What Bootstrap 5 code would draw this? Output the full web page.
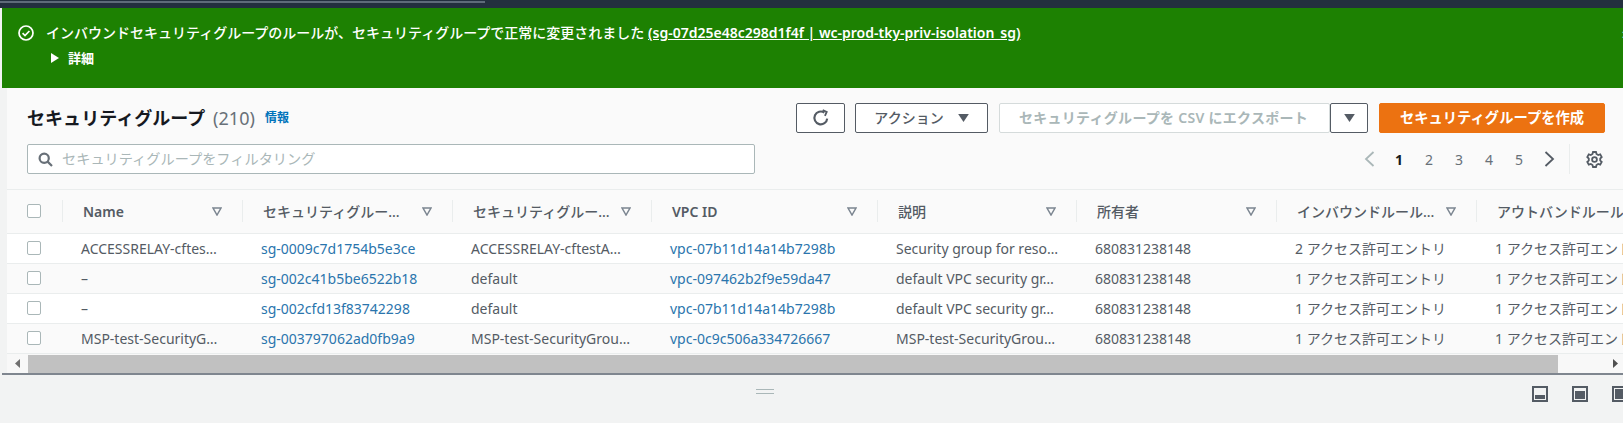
<!DOCTYPE html>
<html lang="ja">
<head>
<meta charset="utf-8">
<title>セキュリティグループ</title>
<link href="https://cdn.jsdelivr.net/npm/bootstrap@5.3.0/dist/css/bootstrap.min.css" rel="stylesheet">
<style>
html,body{height:100%;overflow:hidden;}
body{background:#f2f3f3;font-family:"Noto Sans","Noto Sans CJK JP",sans-serif;font-size:14px;color:#545b64;width:1623px;height:423px;}
.topstrip{height:8px;background:#232f3e;padding-top:1px;}
.topstrip span{display:block;width:485px;height:2px;background:#5f6b7a;}
.flash{height:80px;margin-left:2px;background:#1d8102;color:#fff;padding:14px 0 0 15px;position:relative;}
.flash-main{gap:11px;font-weight:500;line-height:22px;height:22px;}
.flash-main a{color:#fff;text-decoration:underline;font-weight:600;}
.flash-sub{margin:3px 0 0 33px;gap:8px;line-height:22px;font-weight:700;font-size:13px;}
.flash-x{position:absolute;right:-7px;top:19px;font-size:15px;line-height:1;}
.panelbox{margin-left:7px;background:#fafafa;}
.toolbar{padding:15px 18px 15px 20px;border-bottom:1px solid #eaeded;height:102px;}
.hdline{height:30px;}
.hdtitle{font-size:18px;font-weight:700;color:#16191f;margin:0;line-height:30px;letter-spacing:.05px;}
.hdcount{font-size:18px;font-weight:400;color:#687078;margin-left:3px;}
.infolink{font-size:12px;font-weight:600;color:#0073bb;margin-left:10px;text-decoration:none;}
.awsbtn{height:30px;border-radius:2px;border:1px solid #545b64;background:#fff;color:#545b64;font-size:14px;font-weight:500;padding:0;line-height:28px;}
.btn-refresh{width:49px;margin-right:10px;}
.btn-action{width:133px;margin-right:11px;gap:14px;}
.btn-export{width:331px;border-color:#d5dbdb;color:#aab7b8;font-weight:600;justify-content:flex-start;padding-left:19px;letter-spacing:.28px;}
.btn-caret{width:38px;margin-right:11px;}
.btn-create{width:226px;background:#ec7211;border-color:#ec7211;color:#fff;font-weight:700;font-size:14.3px;}
.btn-create:hover,.btn-action:hover,.btn-refresh:hover,.btn-caret:hover{color:inherit;}
.searchrow{margin-top:11px;height:30px;}
.searchbox{width:728px;height:30px;border:1px solid #aab7b8;border-radius:2px;background:#fff;padding-left:10px;gap:9px;color:#aab7b8;font-size:14.2px;line-height:26px;}
.pager{margin-left:auto;height:30px;color:#687078;margin-right:2px;}
.pager b{color:#16191f;}
.pgnum{width:30px;text-align:center;}
.pgprev{width:30px;margin-right:0;}
.pgdiv{width:1px;height:30px;background:#eaeded;margin:0 16px 0 5px;}
.tblwrap{overflow:hidden;height:164px;}
.sgtbl{table-layout:fixed;width:1690px;border-collapse:collapse;margin:0;--bs-table-bg:transparent;}
.sgtbl th{height:43px;padding:0;background:#fafafa;border-bottom:1px solid #eaeded;font-weight:500;color:#545b64;vertical-align:middle;}
.sgtbl th.thb{font-weight:600;}
.thin{height:22px;border-left:1px solid #eaeded;padding:0 20px;justify-content:space-between;white-space:nowrap;overflow:hidden;gap:8px;}
.thin-first{border-left:0;padding:0 0 0 20px;}
.sgtbl td{height:30px;padding:0 0 0 19px;border-bottom:1px solid #eaeded;background:#fff;color:#545b64;vertical-align:middle;white-space:nowrap;overflow:hidden;}
.sgtbl td:first-child{padding-left:20px;}
.sgtbl tr:nth-child(even) td{background:#fafafa;}
.sgtbl td a{color:#2a75ad;text-decoration:none;}
.fakebox{display:block;width:14px;height:14px;border:1px solid #aab7b8;border-radius:2px;background:#fff;}
.sbar{height:19px;background:#f8f8f8;margin-left:0;}
.sbtn{width:21px;height:18px;color:#505050;font-size:9px;}
.sthumb{height:18px;background:#c1c1c1;width:1530px;}
.sbar .send{margin-left:auto;margin-right:0;width:16px;}
.splitbar{border-top:2px solid #7f868f;margin-left:2px;height:49px;}
.grip{margin-left:754px;width:18px;margin-top:14px;height:5px;border-top:1px solid #aab7b8;border-bottom:1px solid #aab7b8;}
.dockicons{margin-left:auto;margin-right:-5px;margin-top:11px;gap:24px;}
</style>
</head>
<body>
<div class="topstrip"><span></span></div>
<div class="flash">
  <div class="d-flex align-items-center flash-main">
    <svg width="18" height="18" viewBox="0 0 18 18" fill="none" stroke="#fff" stroke-width="1.7"><circle cx="9" cy="9" r="7"/><path d="M5.6 9.2l2.4 2.4 4.4-4.6"/></svg>
    <span>インバウンドセキュリティグループのルールが、セキュリティグループで正常に変更されました <a href="#">(sg-07d25e48c298d1f4f | wc-prod-tky-priv-isolation_sg)</a></span>
  </div>
  <div class="d-flex align-items-center flash-sub">
    <svg width="10" height="10" viewBox="0 0 10 10"><path d="M1 0l8 5-8 5z" fill="#fff"/></svg>
    <span>詳細</span>
  </div>
  <span class="flash-x">×</span>
</div>
<div class="panelbox">
  <div class="toolbar">
    <div class="d-flex align-items-center hdline">
      <h2 class="hdtitle">セキュリティグループ <span class="hdcount">(210)</span></h2>
      <a class="infolink" href="#">情報</a>
      <div class="d-flex ms-auto">
        <button class="btn awsbtn btn-refresh d-flex align-items-center justify-content-center" aria-label="更新">
          <svg width="18" height="18" viewBox="0 0 16 16" fill="none" stroke="#545b64" stroke-width="1.9"><path d="M13.5 8.5A5.7 5.7 0 1 1 11 3.2"/><path d="M9.5 1l3.6 1.6-1.6 3.6" stroke-width="1.6"/></svg>
        </button>
        <button class="btn awsbtn btn-action d-flex align-items-center justify-content-center">アクション
          <svg width="11" height="8" viewBox="0 0 12 9"><path d="M0 0h12L6 9z" fill="#545b64"/></svg>
        </button>
        <button class="btn awsbtn btn-export d-flex align-items-center">セキュリティグループを CSV にエクスポート</button>
        <button class="btn awsbtn btn-caret d-flex align-items-center justify-content-center" aria-label="メニュー">
          <svg width="11" height="8" viewBox="0 0 12 9"><path d="M0 0h12L6 9z" fill="#545b64"/></svg>
        </button>
        <button class="btn awsbtn btn-create d-flex align-items-center justify-content-center">セキュリティグループを作成</button>
      </div>
    </div>
    <div class="d-flex align-items-center searchrow">
      <div class="d-flex align-items-center searchbox">
        <svg width="15" height="15" viewBox="0 0 15 15" fill="none" stroke="#687078" stroke-width="2.2"><circle cx="6.2" cy="6.2" r="4.6"/><path d="M9.6 9.6l4.4 4.4"/></svg>
        <span>セキュリティグループをフィルタリング</span>
      </div>
      <div class="d-flex align-items-center pager">
        <span class="pgprev d-flex justify-content-center"><svg width="11" height="16" viewBox="0 0 11 16" fill="none" stroke="#aab7b8" stroke-width="1.8"><path d="M9.5 1L2 8l7.5 7"/></svg></span>
        <b class="pgnum">1</b><span class="pgnum">2</span><span class="pgnum">3</span><span class="pgnum">4</span><span class="pgnum">5</span>
        <span class="pgprev d-flex justify-content-center"><svg width="11" height="16" viewBox="0 0 11 16" fill="none" stroke="#545b64" stroke-width="1.8"><path d="M1.5 1L9 8l-7.5 7"/></svg></span>
        <span class="pgdiv"></span>
        <svg width="17" height="17" viewBox="0 0 17 17" fill="none" stroke="#545b64" stroke-width="1.8"><path d="M7 1h3l.5 2 1.7 1 2-.6 1.5 2.6-1.5 1.5v2l1.500 1.500-1.500 2.600-2-.6-1.700 1-.5 2H7l-.5-2-1.700-1-2 .6L1.300 11l1.500-1.500v-2L1.300 6l1.500-2.600 2 .6 1.700-1z"/><circle cx="8.500" cy="8.500" r="2.400"/></svg>
      </div>
    </div>
  </div>
  <div class="tblwrap">
    <table class="table sgtbl">
      <colgroup><col style="width:55px"><col style="width:180px"><col style="width:210px"><col style="width:199px"><col style="width:226px"><col style="width:199px"><col style="width:200px"><col style="width:200px"><col style="width:221px"></colgroup>
      <thead><tr>
        <th><div class="d-flex align-items-center thin thin-first"><span class="fakebox"></span></div></th>
        <th class="thb"><div class="d-flex align-items-center thin"><span>Name</span><svg width="10" height="9" viewBox="0 0 10 9" fill="none" stroke="#7b8590" stroke-width="1.5"><path d="M1 1h8L5 8z"/></svg></div></th>
        <th><div class="d-flex align-items-center thin"><span>セキュリティグルー...</span><svg width="10" height="9" viewBox="0 0 10 9" fill="none" stroke="#7b8590" stroke-width="1.5"><path d="M1 1h8L5 8z"/></svg></div></th>
        <th><div class="d-flex align-items-center thin"><span>セキュリティグルー...</span><svg width="10" height="9" viewBox="0 0 10 9" fill="none" stroke="#7b8590" stroke-width="1.5"><path d="M1 1h8L5 8z"/></svg></div></th>
        <th class="thb"><div class="d-flex align-items-center thin"><span>VPC ID</span><svg width="10" height="9" viewBox="0 0 10 9" fill="none" stroke="#7b8590" stroke-width="1.5"><path d="M1 1h8L5 8z"/></svg></div></th>
        <th><div class="d-flex align-items-center thin"><span>説明</span><svg width="10" height="9" viewBox="0 0 10 9" fill="none" stroke="#7b8590" stroke-width="1.5"><path d="M1 1h8L5 8z"/></svg></div></th>
        <th><div class="d-flex align-items-center thin"><span>所有者</span><svg width="10" height="9" viewBox="0 0 10 9" fill="none" stroke="#7b8590" stroke-width="1.5"><path d="M1 1h8L5 8z"/></svg></div></th>
        <th><div class="d-flex align-items-center thin"><span>インバウンドルール...</span><svg width="10" height="9" viewBox="0 0 10 9" fill="none" stroke="#7b8590" stroke-width="1.5"><path d="M1 1h8L5 8z"/></svg></div></th>
        <th><div class="d-flex align-items-center thin"><span>アウトバンドルール...</span><svg width="10" height="9" viewBox="0 0 10 9" fill="none" stroke="#7b8590" stroke-width="1.5"><path d="M1 1h8L5 8z"/></svg></div></th>
      </tr></thead>
      <tbody>
        <tr><td><span class="fakebox"></span></td><td>ACCESSRELAY-cftes…</td><td><a href="#">sg-0009c7d1754b5e3ce</a></td><td>ACCESSRELAY-cftestA…</td><td><a href="#">vpc-07b11d14a14b7298b</a></td><td>Security group for reso…</td><td>680831238148</td><td>2 アクセス許可エントリ</td><td>1 アクセス許可エントリ</td></tr>
        <tr><td><span class="fakebox"></span></td><td>–</td><td><a href="#">sg-002c41b5be6522b18</a></td><td>default</td><td><a href="#">vpc-097462b2f9e59da47</a></td><td>default VPC security gr…</td><td>680831238148</td><td>1 アクセス許可エントリ</td><td>1 アクセス許可エントリ</td></tr>
        <tr><td><span class="fakebox"></span></td><td>–</td><td><a href="#">sg-002cfd13f83742298</a></td><td>default</td><td><a href="#">vpc-07b11d14a14b7298b</a></td><td>default VPC security gr…</td><td>680831238148</td><td>1 アクセス許可エントリ</td><td>1 アクセス許可エントリ</td></tr>
        <tr><td><span class="fakebox"></span></td><td>MSP-test-SecurityG…</td><td><a href="#">sg-003797062ad0fb9a9</a></td><td>MSP-test-SecurityGrou…</td><td><a href="#">vpc-0c9c506a334726667</a></td><td>MSP-test-SecurityGrou…</td><td>680831238148</td><td>1 アクセス許可エントリ</td><td>1 アクセス許可エントリ</td></tr>
      </tbody>
    </table>
  </div>
  <div class="d-flex align-items-center sbar">
    <span class="sbtn d-flex align-items-center justify-content-center"><svg width="5" height="9" viewBox="0 0 5 9"><path d="M5 0v9L0 4.500z" fill="#707070"/></svg></span>
    <span class="sthumb"></span>
    <span class="sbtn send d-flex align-items-center justify-content-center"><svg width="5" height="9" viewBox="0 0 5 9"><path d="M0 0v9l5-4.500z" fill="#505050"/></svg></span>
  </div>
</div>
<div class="d-flex splitbar">
  <div class="grip"></div>
  <div class="d-flex dockicons">
    <svg width="16" height="16" viewBox="0 0 16 16" fill="none"><rect x="1" y="1" width="14" height="14" stroke="#545b64" stroke-width="2"/><rect x="3" y="9" width="10" height="4" fill="#545b64"/></svg>
    <svg width="16" height="16" viewBox="0 0 16 16" fill="none"><rect x="1" y="1" width="14" height="14" stroke="#545b64" stroke-width="2"/><rect x="3" y="5" width="10" height="8" fill="#545b64"/></svg>
    <svg width="16" height="16" viewBox="0 0 16 16" fill="none"><rect x="1" y="1" width="14" height="14" stroke="#545b64" stroke-width="2"/><rect x="3" y="3" width="10" height="10" fill="#545b64"/></svg>
  </div>
</div>
<script src="https://cdn.jsdelivr.net/npm/bootstrap@5.3.0/dist/js/bootstrap.bundle.min.js"></script>
</body>
</html>
